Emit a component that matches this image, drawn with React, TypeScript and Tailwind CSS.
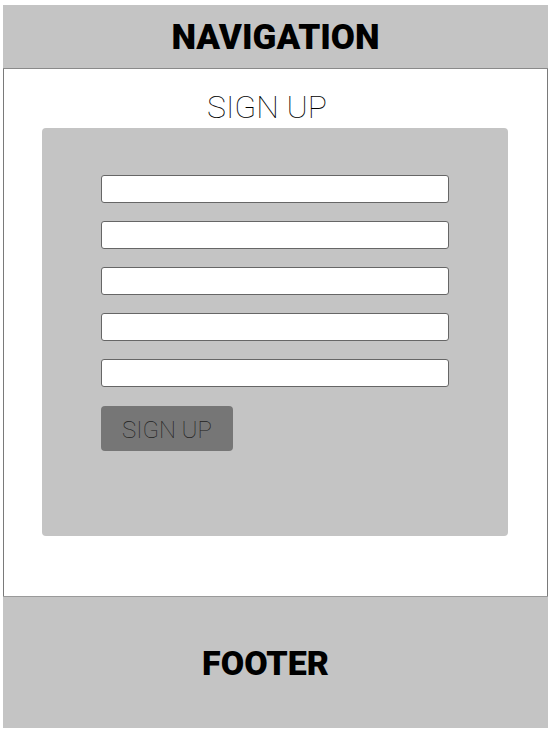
import React from "react";

const inputs = ["name", "email", "username", "password", "confirm"];

export default function App() {
  return (
    <div className="min-h-screen bg-white pt-[5px] pl-[3px] font-['Roboto',sans-serif]">
      <div className="w-[545px]">
        {/* Nav */}
        <nav className="h-[64px] bg-[#c4c4c4] border-b border-[#8a8a8a] flex items-center justify-center pt-[2px]">
          <span className="text-[35px] font-black text-black leading-none">NAVIGATION</span>
        </nav>

        {/* Main */}
        <main className="h-[527px] border-x border-[#7a7a7a] bg-white pt-[20px]">
          <h1 className="text-center text-[32px] font-thin text-black leading-[36px] pr-[17px]">SIGN UP</h1>
          <div className="mt-[3px] ml-[38px] w-[466px] h-[408px] bg-[#c4c4c4] rounded-[4px] pt-[47px] pl-[59px]">
            <div className="flex flex-col gap-[18px]">
              {inputs.map((name) => (
                <input
                  key={name}
                  name={name}
                  className="w-[348px] h-[28px] bg-white border border-[#666] rounded-[3px] outline-none"
                />
              ))}
            </div>
            <button className="mt-[19px] w-[132px] h-[45px] bg-[#767676] rounded-[4px] text-[24px] font-thin text-[#222] leading-none pt-[3px]">
              SIGN UP
            </button>
          </div>
        </main>

        {/* Footer */}
        <footer className="h-[132px] bg-[#c4c4c4] border-t border-[#9a9a9a] flex items-center justify-center pr-[20px]">
          <span className="text-[34px] font-black text-black leading-none">FOOTER</span>
        </footer>
      </div>
    </div>
  );
}
